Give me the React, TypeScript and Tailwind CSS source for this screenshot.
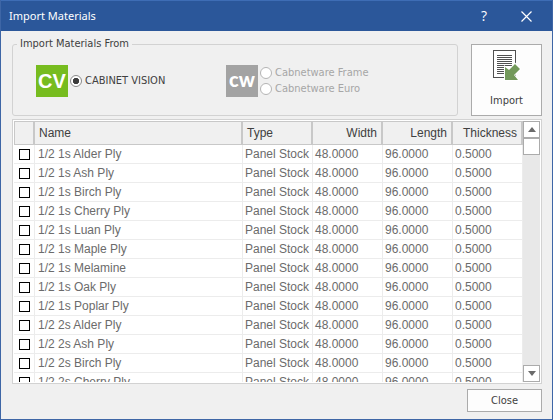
import { useRef } from "react";

const materials = [
  "1/2 1s Alder Ply",
  "1/2 1s Ash Ply",
  "1/2 1s Birch Ply",
  "1/2 1s Cherry Ply",
  "1/2 1s Luan Ply",
  "1/2 1s Maple Ply",
  "1/2 1s Melamine",
  "1/2 1s Oak Ply",
  "1/2 1s Poplar Ply",
  "1/2 2s Alder Ply",
  "1/2 2s Ash Ply",
  "1/2 2s Birch Ply",
  "1/2 2s Cherry Ply",
];

const radioClass =
  "size-3 shrink-0 appearance-none rounded-full border border-[#8a8a8a] bg-white bg-radial from-[#3c3c3c] from-0% to-white to-0% checked:from-40% checked:to-50% disabled:border-[#b4b4b4]";

function TitleBar() {
  return (
    <header className="flex h-[31px] shrink-0 items-center border-t border-[#3e6db5] bg-[#2b579a] pr-[18px] pl-2 text-white">
      <h1 className="flex-1 font-['Noto_Sans','Open_Sans',sans-serif] text-[11px]">Import Materials</h1>
      <button type="button" aria-label="Help" className="mr-6 w-5 text-center font-['Open_Sans',sans-serif] text-sm leading-5">
        ?
      </button>
      <button type="button" aria-label="Close window" className="flex w-4 justify-center">
        <svg width="11" height="11" viewBox="0 0 11 11" stroke="white" strokeWidth="1.2">
          <path d="M.5.5 10.5 10.5M10.5.5.5 10.5" />
        </svg>
      </button>
    </header>
  );
}

function SourceGroup() {
  return (
    <fieldset className="min-w-0 flex-1 rounded-[3px] border border-[#d2d2d2]">
      <legend className="ml-1 px-[3px] leading-4">Import Materials From</legend>
      <div className="flex pt-[13px] pl-[23px]">
        <div className="flex w-[190px] items-center">
          <div className="flex size-8 items-center justify-center bg-[#77bc1f] font-['Liberation_Sans',Arial,sans-serif] text-xl leading-8 font-bold text-white">
            CV
          </div>
          <label className="flex items-center gap-[3px] pl-[2px] leading-4">
            <input type="radio" name="source" defaultChecked className={radioClass} />
            CABINET VISION
          </label>
        </div>
        <div className="flex items-center">
          <div className="flex size-8 items-center justify-center bg-[#a3a3a3] pb-1 font-['Lato',sans-serif] text-xl leading-7 font-black text-white">
            cw
          </div>
          <div className="flex flex-col pl-[2px] text-[#a6a6a6]">
            <label className="flex items-center gap-[3px] leading-4">
              <input type="radio" name="source" disabled className={radioClass} />
              Cabnetware Frame
            </label>
            <label className="flex items-center gap-[3px] leading-4">
              <input type="radio" name="source" disabled className={radioClass} />
              Cabnetware Euro
            </label>
          </div>
        </div>
      </div>
    </fieldset>
  );
}

function ImportIcon() {
  return (
    <svg width="28" height="31" viewBox="0 0 28 31">
      <g shapeRendering="crispEdges">
        <rect x="0.5" y="0.5" width="22" height="27" fill="white" stroke="#505050" />
        <path
          d="M4 5.5H19M4 7.5H19M4 9.5H19M4 11.5H19M4 13.5H19M4 15.5H19M4 17.5H11M4 19.5H11M4 21.5H11M4 23.5H11"
          stroke="#505050"
        />
      </g>
      <path d="M12 17 16 20 22 14 27 19 21 25 25 30H12z" fill="#73995a" stroke="white" strokeWidth="2" paintOrder="stroke" />
    </svg>
  );
}

function MaterialList() {
  const viewport = useRef<HTMLDivElement>(null);
  const scroll = (top: number) => viewport.current?.scrollBy({ top });
  const head = "h-6 border-t border-r-2 border-b border-[#c8c8c8] bg-[#f0f0f0] px-1 font-normal text-[#404040]";
  const cell = "h-[19px] border-r border-b border-[#ececec]";

  return (
    <div className="flex min-h-0 flex-1 border border-[#d2d2d2] bg-white p-px">
      <div ref={viewport} className="min-w-0 flex-1 overflow-hidden">
        <table className="w-full table-fixed border-separate border-spacing-0 font-['Liberation_Sans',Arial,sans-serif] text-xs leading-4 whitespace-nowrap text-[#6b6b6b]">
          <colgroup>
            <col className="w-[21px]" />
            <col />
            <col className="w-[70px]" />
            <col className="w-[70px]" />
            <col className="w-[70px]" />
            <col className="w-[70px]" />
          </colgroup>
          <thead className="sticky top-0">
            <tr>
              <th aria-label="Selected" className={`${head} border-l`} />
              <th className={`${head} text-left`}>Name</th>
              <th className={`${head} text-left`}>Type</th>
              <th className={`${head} text-right`}>Width</th>
              <th className={`${head} text-right`}>Length</th>
              <th className={`${head} text-right`}>Thickness</th>
            </tr>
          </thead>
          <tbody>
            {materials.map((name) => (
              <tr key={name}>
                <td className={`${cell} pl-[5px]`}>
                  <input
                    type="checkbox"
                    aria-label={name}
                    className="block size-[11px] appearance-none border border-black bg-white checked:bg-black"
                  />
                </td>
                <td className={`${cell} pl-[3px]`}>{name}</td>
                <td className={`${cell} pl-[2px]`}>Panel Stock</td>
                <td className={`${cell} pl-[2px]`}>48.0000</td>
                <td className={`${cell} pl-[2px]`}>96.0000</td>
                <td className={`${cell} pl-[2px]`}>0.5000</td>
              </tr>
            ))}
          </tbody>
        </table>
      </div>
      <div className="flex w-[17px] flex-col bg-[#e8e8e8]">
        <button
          type="button"
          aria-label="Scroll up"
          onClick={() => scroll(-19)}
          className="flex h-[17px] items-center justify-center border border-[#ababab] bg-white"
        >
          <svg width="8" height="5" viewBox="0 0 8 5" fill="#6b6b6b">
            <path d="M4 0 8 5H0z" />
          </svg>
        </button>
        <div className="h-[17px] border border-[#ababab] bg-white" />
        <button
          type="button"
          aria-label="Scroll down"
          onClick={() => scroll(19)}
          className="mt-auto flex h-[17px] items-center justify-center border border-[#ababab] bg-white"
        >
          <svg width="8" height="5" viewBox="0 0 8 5" fill="#6b6b6b">
            <path d="M0 0H8L4 5z" />
          </svg>
        </button>
      </div>
    </div>
  );
}

export default function App() {
  return (
    <div className="flex h-screen flex-col border-x border-b border-[#3e66a6] bg-[#f0f0f0] font-['DejaVu_Sans_Condensed','DejaVu_Sans',Tahoma,sans-serif] text-[11px] text-[#404040]">
      <TitleBar />
      <main className="flex min-h-0 flex-1 flex-col px-[11px] pt-[5px] pr-[10px] pb-[7px]">
        <div className="mb-[3px] flex h-20 shrink-0 gap-[13px]">
          <SourceGroup />
          <button
            type="button"
            className="mt-2 flex w-[71px] flex-col items-center gap-3 border border-[#ababab] bg-[#fdfdfd] pt-[5px] leading-4"
          >
            <ImportIcon />
            Import
          </button>
        </div>
        <MaterialList />
        <footer className="mt-[5px] flex justify-end">
          <button type="button" className="h-[23px] w-[75px] border border-[#ababab] bg-[#fdfdfd] leading-4">
            Close
          </button>
        </footer>
      </main>
    </div>
  );
}
